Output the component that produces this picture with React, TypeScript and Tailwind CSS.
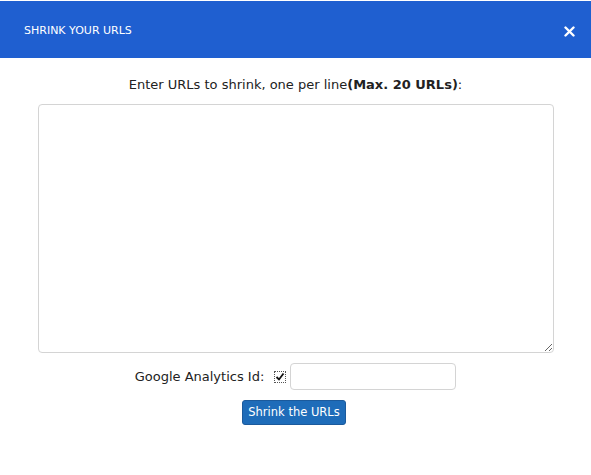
export default function App() {
  return (
    <div className="w-[591px] h-[475px] bg-white flex flex-col" style={{ fontFamily: '"DejaVu Sans", Verdana, sans-serif' }}>
      {/* Header */}
      <div className="mt-px h-[57px] bg-[#1f5fd0] flex items-center justify-between pl-6 pr-4 pt-[3px]">
        <span className="text-white text-[11px]">SHRINK YOUR URLS</span>
        <svg width="11" height="11" viewBox="0 0 11 11">
          <path d="M1.5 1.5 L9.5 9.5 M9.5 1.5 L1.5 9.5" stroke="#fff" strokeWidth="2.4" strokeLinecap="round" />
        </svg>
      </div>

      {/* Body */}
      <div className="flex flex-col items-center pt-[19px]">
        <p className="text-[13px] text-[#222] leading-[16px]">
          Enter URLs to shrink, one per line<b>(Max. 20 URLs)</b>:
        </p>
        <textarea className="mt-[11px] w-[516px] h-[249px] border border-[#d4d4d4] rounded-[4px] ml-px outline-none" />
        <div className="mt-[10px] flex items-center text-[13px] text-[#222]">
          <span className="mr-[10px]">Google Analytics Id:</span>
          <span className="w-[12px] h-[12px] border border-dotted border-[#555] flex items-center justify-center bg-white">
            <svg width="10" height="10" viewBox="0 0 10 10">
              <path d="M1.5 5 L4 7.5 L8.5 1.5" stroke="#111" strokeWidth="1.8" fill="none" />
            </svg>
          </span>
          <input className="ml-[4px] w-[166px] h-[27px] border border-[#d4d4d4] rounded-[4px] outline-none" />
        </div>
        <button className="mt-[10px] mr-[3px] h-[25px] w-[104px] bg-[#1e6cb9] border border-[#1b5a9c] rounded-[3px] text-white text-[11.5px]">
          Shrink the URLs
        </button>
      </div>
    </div>
  );
}
